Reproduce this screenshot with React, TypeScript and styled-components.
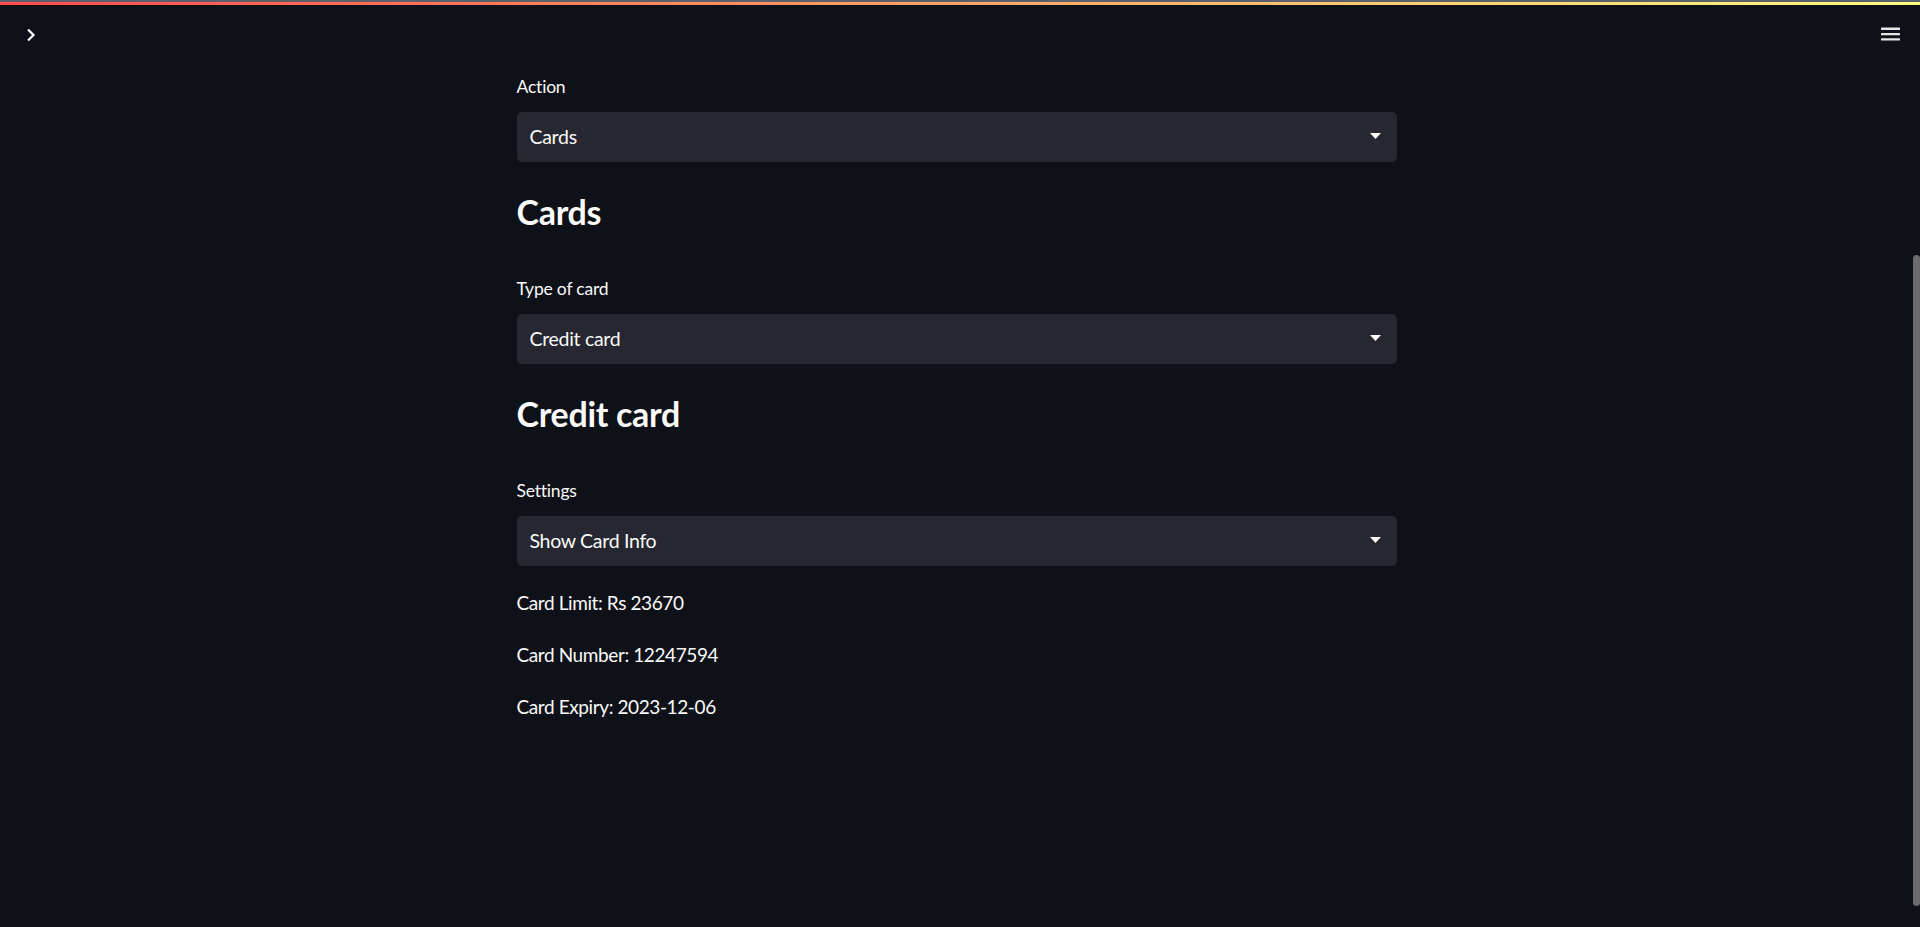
import React from 'react';
import styled, { createGlobalStyle } from 'styled-components';

const GlobalStyle = createGlobalStyle`
  html, body {
    margin: 0;
    padding: 0;
    background: #0e1117;
    color: #fafafa;
    font-family: Lato, "Noto Sans", sans-serif;
  }
`;

const Page = styled.div`
  position: relative;
  min-height: 100vh;
  display: flex;
  flex-direction: column;
  overflow: hidden;
`;

const Decoration = styled.div`
  height: 3px;
  border-top: 2px solid #5a616c;
  background: linear-gradient(90deg, #ff4b4b, #fffd80);
`;

const Header = styled.header`
  height: 57px;
  box-sizing: border-box;
  display: flex;
  align-items: center;
  justify-content: space-between;
  padding: 2px 20px 0 26px;
`;

const IconButton = styled.button`
  display: flex;
  align-items: center;
  justify-content: center;
  padding: 0;
  border: none;
  background: transparent;
  color: #fafafa;
  cursor: pointer;
`;

const Main = styled.main`
  width: calc(100% - 7px);
  display: flex;
  justify-content: center;
  padding-top: 10px;
`;

const Block = styled.div`
  width: 880px;
  display: flex;
  flex-direction: column;
  gap: 20px;
`;

const Field = styled.div`
  display: flex;
  flex-direction: column;
`;

const Label = styled.label`
  font-size: 17.5px;
  line-height: 28px;
  padding-top: 1px;
  margin-bottom: 11px;
  letter-spacing: -0.2px;
  color: #fafafa;
`;

const SelectBox = styled.div`
  height: 50px;
  box-sizing: border-box;
  display: flex;
  align-items: center;
  justify-content: space-between;
  padding: 0 16px 2px 13px;
  background: #262730;
  border-radius: 5px;
  font-size: 19.5px;
  letter-spacing: -0.3px;
  color: #fafafa;
  cursor: pointer;
`;

const Heading = styled.h3`
  margin: 0;
  padding: 9px 0 21px;
  font-size: 34px;
  line-height: 42px;
  letter-spacing: -0.3px;
  font-weight: 700;
  color: #fafafa;
`;

const Text = styled.p`
  margin: 0;
  padding-top: 1px;
  font-size: 19px;
  line-height: 31px;
  letter-spacing: -0.4px;
  color: #fafafa;
`;

const ScrollThumb = styled.div`
  position: absolute;
  right: 0;
  top: 255px;
  width: 7px;
  height: 651px;
  border-radius: 4px;
  background: #6b6b6e;
`;

const Chevron = () => (
  <svg width="10" height="14" viewBox="0 0 10 14">
    <path d="M2 1.5 L7.5 7 L2 12.5" fill="none" stroke="#fafafa" strokeWidth="2.2" />
  </svg>
);

const Hamburger = () => (
  <svg width="19" height="15" viewBox="0 0 19 15">
    <rect x="0" y="0.5" width="19" height="2.4" rx="0.5" fill="#e6e6e6" />
    <rect x="0" y="5.9" width="19" height="2.4" rx="0.5" fill="#e6e6e6" />
    <rect x="0" y="11.2" width="19" height="2.4" rx="0.5" fill="#e6e6e6" />
  </svg>
);

const Caret = () => (
  <svg width="11" height="6" viewBox="0 0 11 6">
    <path d="M0 0 L11 0 L5.5 6 Z" fill="#fafafa" />
  </svg>
);

const Select = ({ label, value }: { label: string; value: string }) => (
  <Field>
    <Label>{label}</Label>
    <SelectBox>
      <span>{value}</span>
      <Caret />
    </SelectBox>
  </Field>
);

const card = {
  limit: 23670,
  number: '12247594',
  expiry: '2023-12-06',
};

const App = () => (
  <Page>
    <GlobalStyle />
    <Decoration />
    <Header>
      <IconButton>
        <Chevron />
      </IconButton>
      <IconButton>
        <Hamburger />
      </IconButton>
    </Header>
    <Main>
      <Block>
        <Select label="Action" value="Cards" />
        <Heading>Cards</Heading>
        <Select label="Type of card" value="Credit card" />
        <Heading>Credit card</Heading>
        <Select label="Settings" value="Show Card Info" />
        <Text>Card Limit: Rs {card.limit}</Text>
        <Text>Card Number: {card.number}</Text>
        <Text>Card Expiry: {card.expiry}</Text>
      </Block>
    </Main>
    <ScrollThumb />
  </Page>
);

export default App;
